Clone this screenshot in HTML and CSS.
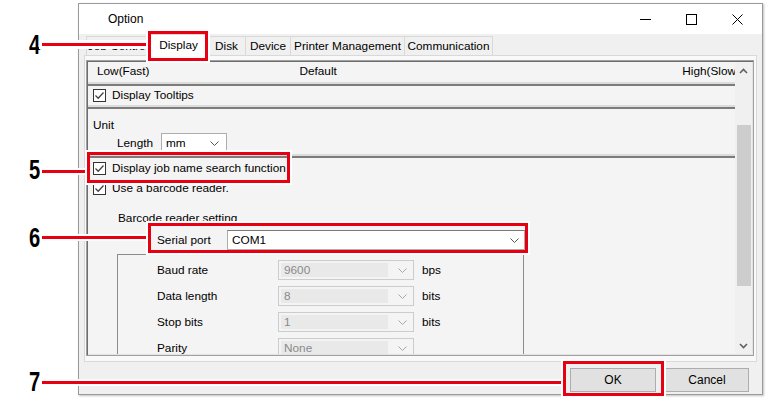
FILE: index.html
```html
<!DOCTYPE html>
<html lang="en">

<head>
  <meta charset="UTF-8" />
  <meta name="viewport" content="width=device-width, initial-scale=1.0" />
  <title>Option</title>
  <link rel="stylesheet" href="styles.css">
</head>

<body>
  <div class="canvas">
    <div class="window">
      <div class="titlebar">
        <span class="title">Option</span>
        <div class="controls">
          <span class="ctrl"><svg width="11" height="11" viewBox="0 0 11 11"><path d="M0 5.5 H11" stroke="#000" stroke-width="1" /></svg></span>
          <span class="ctrl"><svg width="11" height="11" viewBox="0 0 11 11"><rect x="0.5" y="0.5" width="10" height="10" fill="none" stroke="#000" stroke-width="1" /></svg></span>
          <span class="ctrl"><svg width="11" height="11" viewBox="0 0 11 11"><path d="M0.5 0.5 L10.5 10.5 M10.5 0.5 L0.5 10.5" stroke="#000" stroke-width="1" /></svg></span>
        </div>
      </div>

      <div class="dialog">
        <ul class="tabs">
          <li class="tab t-job">Job Control</li>
          <li class="tab t-display active">Display</li>
          <li class="tab t-disk">Disk</li>
          <li class="tab t-device">Device</li>
          <li class="tab t-printer">Printer Management</li>
          <li class="tab t-comm">Communication</li>
        </ul>

        <div class="tabpage">
          <div class="panel">
            <div class="scroll">
              <!-- speed header -->
              <div class="section head-row">
                <span>Low(Fast)</span>
                <span class="default">Default</span>
                <span class="high">High(Slow)</span>
              </div>

              <div class="section tooltips-row">
                <label class="check">
                  <svg class="box" width="13" height="13" viewBox="0 0 13 13"><rect x="0.5" y="0.5" width="12" height="12" fill="#fff" stroke="#333" /><path d="M2.5 6.5 L5.2 9.2 L10.5 3.5" fill="none" stroke="#444" stroke-width="1.3" /></svg>
                  Display Tooltips
                </label>
              </div>

              <div class="section unit">
                <div class="unit-title">Unit</div>
                <div class="field length">
                  <span class="field-label">Length</span>
                  <div class="combo mm">
                    <span>mm</span>
                    <svg class="chev" width="9" height="5" viewBox="0 0 9 5"><path d="M0.5 0.5 L4.5 4.5 L8.5 0.5" fill="none" stroke="#555" /></svg>
                  </div>
                </div>
              </div>

              <div class="section job">
                <label class="check">
                  <svg class="box" width="13" height="13" viewBox="0 0 13 13"><rect x="0.5" y="0.5" width="12" height="12" fill="#fff" stroke="#333" /><path d="M2.5 6.5 L5.2 9.2 L10.5 3.5" fill="none" stroke="#444" stroke-width="1.3" /></svg>
                  Display job name search function
                </label>
                <label class="check">
                  <svg class="box" width="13" height="13" viewBox="0 0 13 13"><rect x="0.5" y="0.5" width="12" height="12" fill="#fff" stroke="#333" /><path d="M2.5 6.5 L5.2 9.2 L10.5 3.5" fill="none" stroke="#444" stroke-width="1.3" /></svg>
                  Use a barcode reader.
                </label>

                <div class="barcode-title">Barcode reader setting</div>

                <div class="field serial">
                  <span class="field-label">Serial port</span>
                  <div class="combo com">
                    <span>COM1</span>
                    <svg class="chev" width="9" height="5" viewBox="0 0 9 5"><path d="M0.5 0.5 L4.5 4.5 L8.5 0.5" fill="none" stroke="#555" /></svg>
                  </div>
                </div>

                <div class="group">
                  <div class="field">
                    <span class="field-label">Baud rate</span>
                    <div class="combo disabled"><span>9600</span><svg class="chev" width="9" height="5" viewBox="0 0 9 5"><path d="M0.5 0.5 L4.5 4.5 L8.5 0.5" fill="none" stroke="#a8a8a8" /></svg></div>
                    <span class="suffix">bps</span>
                  </div>
                  <div class="field">
                    <span class="field-label">Data length</span>
                    <div class="combo disabled"><span>8</span><svg class="chev" width="9" height="5" viewBox="0 0 9 5"><path d="M0.5 0.5 L4.5 4.5 L8.5 0.5" fill="none" stroke="#a8a8a8" /></svg></div>
                    <span class="suffix">bits</span>
                  </div>
                  <div class="field">
                    <span class="field-label">Stop bits</span>
                    <div class="combo disabled"><span>1</span><svg class="chev" width="9" height="5" viewBox="0 0 9 5"><path d="M0.5 0.5 L4.5 4.5 L8.5 0.5" fill="none" stroke="#a8a8a8" /></svg></div>
                    <span class="suffix">bits</span>
                  </div>
                  <div class="field">
                    <span class="field-label">Parity</span>
                    <div class="combo disabled"><span>None</span><svg class="chev" width="9" height="5" viewBox="0 0 9 5"><path d="M0.5 0.5 L4.5 4.5 L8.5 0.5" fill="none" stroke="#a8a8a8" /></svg></div>
                  </div>
                </div>
              </div>
            </div>

            <div class="scrollbar">
              <span class="arrow"><svg width="9" height="6" viewBox="0 0 9 6"><path d="M1 5 L4.5 1.5 L8 5" fill="none" stroke="#606060" stroke-width="1.6" /></svg></span>
              <div class="track"><div class="thumb"></div></div>
              <span class="arrow"><svg width="9" height="6" viewBox="0 0 9 6"><path d="M1 1 L4.5 4.5 L8 1" fill="none" stroke="#606060" stroke-width="1.6" /></svg></span>
            </div>
          </div>
        </div>

        <div class="buttons">
          <button class="btn">OK</button>
          <button class="btn">Cancel</button>
        </div>
      </div>
    </div>

    <!-- callouts -->
    <span class="num n4">4</span>
    <span class="lead l4"></span>
    <span class="mark m4"></span>

    <span class="num n5">5</span>
    <span class="lead l5"></span>
    <span class="mark m5"></span>

    <span class="num n6">6</span>
    <span class="lead l6"></span>
    <span class="mark m6"></span>

    <span class="num n7">7</span>
    <span class="lead l7"></span>
    <span class="mark m7"></span>
  </div>
</body>

</html>
```

FILE: styles.css
```css
* {
  box-sizing: border-box;
}

body {
  margin: 0;
  background: #fff;
  font-family: "Liberation Sans", Arial, sans-serif;
  font-size: 11.8px;
  color: #000;
}

.canvas {
  position: relative;
  width: 766px;
  height: 398px;
  overflow: hidden;
}

/* window */

.window {
  margin: 3px 0 0 78px;
  width: 685px;
  height: 392px;
  border: 1px solid #9a9a9a;
  background: #f0f0f0;
  box-shadow: 1px 1px 2px rgba(0, 0, 0, 0.25);
  display: flex;
  flex-direction: column;
}

.titlebar {
  height: 30px;
  background: #fff;
  display: flex;
  align-items: center;
  padding-left: 29px;
}

.title {
  font-size: 12px;
}

.controls {
  margin-left: auto;
  margin-right: 2px;
  display: flex;
  height: 100%;
}

.ctrl {
  width: 46px;
  display: flex;
  align-items: center;
  justify-content: center;
}

.dialog {
  flex: 1;
  padding: 1px 5px 0 5px;
  display: flex;
  flex-direction: column;
}

/* tabs */

.tabs {
  margin: 0 0 0 2px;
  padding: 0;
  list-style: none;
  display: flex;
  align-items: flex-end;
  height: 20px;
  position: relative;
  z-index: 1;
}

.tab {
  height: 19px;
  line-height: 18px;
  text-align: center;
  background: #f0f0f0;
  border: 1px solid #d9d9d9;
  border-bottom: none;
  margin-left: -1px;
  white-space: nowrap;
}

.tab.active {
  height: 22px;
  background: #fff;
  margin-bottom: -1px;
  line-height: 20px;
}

.t-job { width: 64px; margin-left: 0; }
.t-display { width: 59px; }
.t-disk { width: 39px; }
.t-device { width: 46px; }
.t-printer { width: 115px; }
.t-comm { width: 89px; }

.tabpage {
  height: 307px;
  border: 1px solid #d9d9d9;
  background: #f9f9f9;
  padding: 4px 2px 5px 1px;
  display: flex;
}

.panel {
  flex: 1;
  display: flex;
  border: 1px solid #a0a0a0;
  box-shadow: inset 1px 1px 0 #6d6d6d, inset -1px -1px 0 #e3e3e3;
  padding: 1px;
  background: #f4f4f4;
  overflow: hidden;
}

.scroll {
  flex: 1;
  overflow: hidden;
  display: flex;
  flex-direction: column;
}

.section {
  border-bottom: 2px solid #7c7c7c;
  box-shadow: inset 0 -2px 0 #dcdcdc;
  flex-shrink: 0;
}

.head-row {
  height: 24px;
  display: flex;
  align-items: center;
  padding: 0 0 4px 9px;
  white-space: nowrap;
}

.head-row .default {
  margin-left: 150px;
}

.head-row .high {
  margin-left: auto;
  margin-right: -5px;
}

.tooltips-row {
  height: 23px;
  display: flex;
  align-items: center;
  padding: 0 0 3px 5px;
}

.check {
  display: flex;
  align-items: center;
  gap: 6px;
  height: 20px;
  white-space: nowrap;
}

.box {
  flex-shrink: 0;
}

.unit {
  height: 49px;
  padding: 8px 0 0 5px;
}

.unit-title {
  height: 16px;
  line-height: 16px;
}

.field {
  display: flex;
  align-items: center;
  height: 20px;
  flex-shrink: 0;
}

.field-label {
  white-space: nowrap;
}

.length {
  padding-left: 24px;
}

.length .field-label {
  width: 44px;
}

.combo {
  height: 20px;
  background: #fff;
  border: 1px solid #7a7a7a;
  display: flex;
  align-items: center;
  padding: 0 7px 0 4px;
  justify-content: space-between;
}

.mm {
  width: 66px;
  border-color: #adadad;
}

.job {
  border-bottom: none;
  box-shadow: none;
  padding: 0 0 0 5px;
  flex: 1;
}

.barcode-title {
  margin: 12px 0 0 25px;
  height: 16px;
  line-height: 16px;
}

.serial {
  margin-top: 4px;
  padding-left: 64px;
}

.serial .field-label {
  width: 70px;
}

.com {
  width: 298px;
  border-color: #adadad;
  border-top-color: #7a7a7a;
  padding-right: 5px;
}

.group {
  margin: 4px 0 0 24px;
  width: 407px;
  height: 120px;
  border: 1px solid #8c8c8c;
  border-bottom: none;
  padding: 5px 0 0 39px;
  display: flex;
  flex-direction: column;
  gap: 6px;
}

.group .field-label {
  width: 121px;
}

.combo.disabled {
  width: 136px;
  background: #f4f4f4;
  border-color: #cccccc;
  color: #8a8a8a;
  padding: 2px 6px 2px 2px;
}

.combo.disabled span {
  background: #e9e9e9;
  height: 100%;
  flex: 1;
  padding-left: 3px;
  line-height: 15px;
  margin-right: 10px;
}

.suffix {
  margin-left: 8px;
}

/* scrollbar */

.scrollbar {
  width: 17px;
  background: #f0f0f0;
  display: flex;
  flex-direction: column;
}

.arrow {
  height: 17px;
  display: flex;
  align-items: center;
  justify-content: center;
  flex-shrink: 0;
}

.track {
  flex: 1;
  padding: 46px 1px 0 2px;
}

.thumb {
  height: 161px;
  background: #cdcdcd;
}

/* buttons */

.buttons {
  display: flex;
  justify-content: flex-end;
  gap: 9px;
  padding: 6px 8px 0 0;
}

.btn {
  font-family: inherit;
  font-size: 12px;
  width: 86px;
  height: 24px;
  background: #e1e1e1;
  border: 1px solid #adadad;
  padding: 0;
  color: #000;
}

.btn + .btn {
  width: 84px;
}

/* callouts */

.num,
.lead,
.mark {
  position: absolute;
  z-index: 2;
}

.num {
  left: 29px;
  font-weight: bold;
  font-size: 28px;
  line-height: 28px;
  transform: scaleX(0.72);
  transform-origin: left center;
}

.lead {
  left: 42px;
  height: 3px;
  background: #e60012;
  box-shadow: 0 0 0 2px #fff;
}

.mark {
  border: 3px solid #e60012;
  box-shadow: 0 0 0 2px #fff;
}

.n4 { top: 31px; }
.l4 { top: 43px; width: 106px; box-shadow: 0 0 0 3px #fff; }
.m4 { left: 148px; top: 31px; width: 60px; height: 30px; }

.n5 { top: 156px; }
.l5 { top: 170px; width: 45px; }
.m5 { left: 87px; top: 152px; width: 203px; height: 31px; }

.n6 { top: 224px; }
.l6 { top: 236px; width: 106px; }
.m6 { left: 148px; top: 223px; width: 380px; height: 30px; }

.n7 { top: 368px; }
.l7 { top: 381px; width: 521px; }
.m7 { left: 563px; top: 361px; width: 101px; height: 35px; }
```
